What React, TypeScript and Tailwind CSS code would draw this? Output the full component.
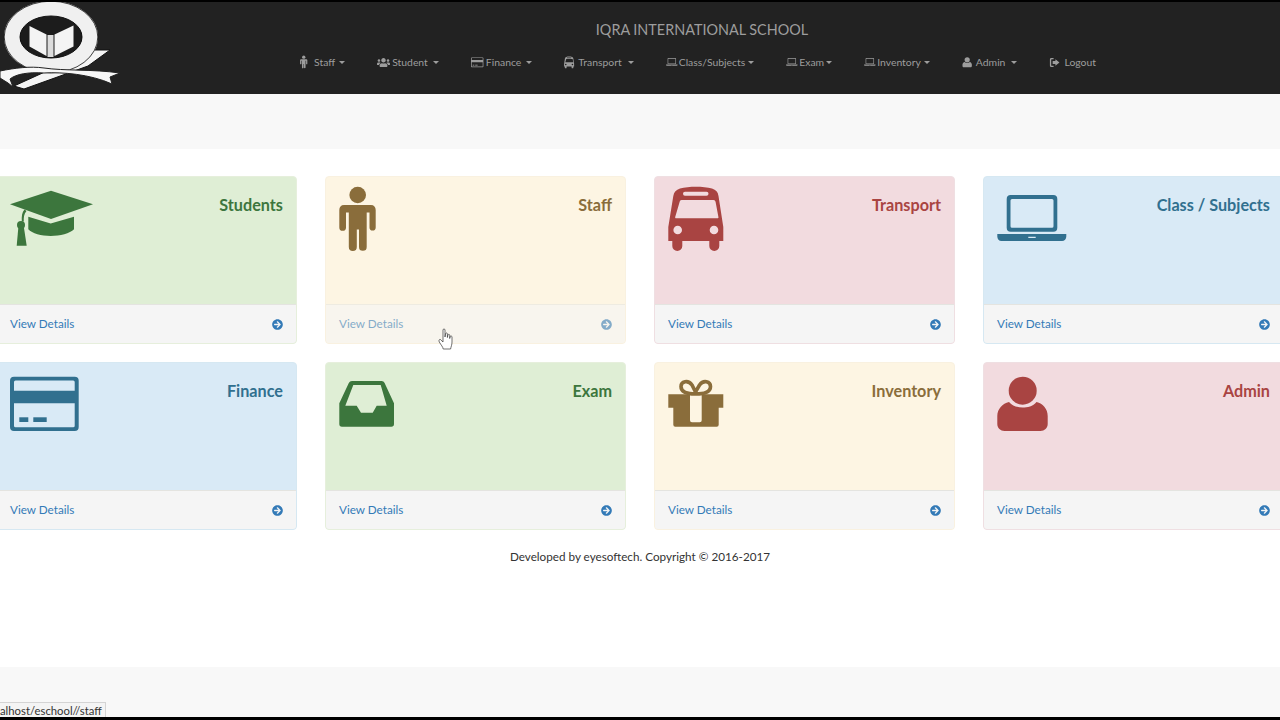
import React from "react";
import { FaArrowCircleRight, FaUsers } from "react-icons/fa";

type IconProps = { className?: string };

const Cap = ({ className }: IconProps) => (
  <svg viewBox="0 0 90 70" className={className} fill="currentColor">
    <path d="M0 20.3 41 6.7 83 20.3 41 35Z" />
    <path d="M18.3 32.7 40.7 39.6 64 32.7V45.3C60 49.5 50 52 40.7 52S22 49.5 18.3 45.3Z" />
    <path d="M14.5 25.5C12 28 11.5 32 11.8 37.5L13.8 37.5C13.6 33 14 30 16.5 27Z" />
    <circle cx="11" cy="41" r="4" />
    <path d="M8.3 44H14L16.7 61.7H6.7Z" />
  </svg>
);

const Male = ({ className }: IconProps) => (
  <svg viewBox="0 0 40 70" className={className} fill="currentColor">
    <circle cx="18.7" cy="11" r="8.3" />
    <path d="M5 21H32C35 21 36.7 23 36.7 26V43.5A3 3 0 0 1 30.5 43.5V28.5H27.7V63A3.2 3.2 0 0 1 20 63V45.5H17.8V63A3.2 3.2 0 0 1 9.8 63V28.5H7V43.5A3.2 3.2 0 0 1 .3 43.5V26C.3 23 2 21 5 21Z" />
  </svg>
);

const Bus = ({ className }: IconProps) => (
  <svg viewBox="0 0 60 70" className={className} fill="currentColor" fillRule="evenodd">
    <path d="M12 4.5C21 2 35 2 44 4.5 48 5.8 50 8 50.5 12L55.3 43V57H51.3V62A5 5 0 0 1 41.3 62V57H14.3V62A5 5 0 0 1 4.3 62V57H.3V43L5.3 12C6 8 8 5.8 12 4.5ZM17 7.7A2 2 0 0 0 17 11.7H38.5A2 2 0 0 0 38.5 7.7ZM13.5 16C12.5 16 11.9 16.8 11.6 18L7.2 33C7 33.8 7.4 34.3 8.2 34.3H49.5C50.3 34.3 50.6 33.8 50.4 33L47.6 18C47.3 16.8 46.7 16 45.5 16ZM9.7 41.7A4.3 4.3 0 1 0 9.7 50.3 4.3 4.3 0 1 0 9.7 41.7ZM46 41.7A4.3 4.3 0 1 0 46 50.3 4.3 4.3 0 1 0 46 41.7Z" />
  </svg>
);

const Laptop = ({ className }: IconProps) => (
  <svg viewBox="0 0 72 70" className={className} fill="currentColor" fillRule="evenodd">
    <path d="M13.7 11H56.3A4 4 0 0 1 60.3 15V43.7A4 4 0 0 1 56.3 47.7H13.7A4 4 0 0 1 9.7 43.7V15A4 4 0 0 1 13.7 11ZM15 15A1.5 1.5 0 0 0 13.5 16.5V42.3A1.5 1.5 0 0 0 15 43.8H55A1.5 1.5 0 0 0 56.5 42.3V16.5A1.5 1.5 0 0 0 55 15Z" />
    <path d="M.3 50H69.3V52.5C69.3 55 67.5 57 65 57H4.5C2 57 .3 55 .3 52.5ZM31.3 52.7V54H38.7V52.7Z" />
  </svg>
);

const Card = ({ className }: IconProps) => (
  <svg viewBox="0 0 72 70" className={className} fill="currentColor" fillRule="evenodd">
    <path d="M4 6.7H64.7A4 4 0 0 1 68.7 10.7V57A4 4 0 0 1 64.7 61H4A4 4 0 0 1 0 57V10.7A4 4 0 0 1 4 6.7ZM5.5 10.5A1.5 1.5 0 0 0 4 12V20.7H64.7V12A1.5 1.5 0 0 0 63.2 10.5ZM4 33.3V55.7A1.5 1.5 0 0 0 5.5 57.2H63.2A1.5 1.5 0 0 0 64.7 55.7V33.3Z" />
    <rect x="9.3" y="47.3" width="9" height="4.7" />
    <rect x="23.3" y="47.3" width="13.4" height="4.7" />
  </svg>
);

const Inbox = ({ className }: IconProps) => (
  <svg viewBox="0 0 60 70" className={className} fill="currentColor" fillRule="evenodd">
    <path d="M13 11H42.5C44 11 45 11.7 45.6 13L55 33.3V54A2.7 2.7 0 0 1 52.3 56.7H3A2.7 2.7 0 0 1 .3 54V33.3L9.8 13C10.5 11.7 11.5 11 13 11ZM14.3 15 6.3 35.7H17.7L22 42.7H33.7L37.7 35.7H47.7L41.7 15Z" />
  </svg>
);

const Gift = ({ className }: IconProps) => (
  <svg viewBox="0 0 60 70" className={className} fill="currentColor" fillRule="evenodd">
    <path d="M.3 24.3H55.3V37.7H50.7V54.7A2 2 0 0 1 48.7 56.7H7.3A2 2 0 0 1 5.3 54.7V37.7H.3ZM22 24.3V50.3A2 2 0 0 0 24 52.3H31.7A2 2 0 0 0 33.7 50.3V24.3Z" />
    <path
      d="M27.5 24C22 24 13 23 13 16.5 13 11.5 20 9.5 24 15L27.5 22 31.5 15C35.5 9.5 42.5 11.5 42.5 16.5 42.5 23 33 24 27.5 24Z"
      fill="none"
      stroke="currentColor"
      strokeWidth="3.6"
    />
  </svg>
);

const User = ({ className }: IconProps) => (
  <svg viewBox="0 0 60 70" className={className} fill="currentColor">
    <circle cx="25.7" cy="20.7" r="14" />
    <path d="M12 32C16 36.5 21 37.5 25.7 37.5S36 36.5 39.5 32C46 33.5 50.7 39 50.7 46V54C50.7 58 47.5 61 43.5 61H7.5C3.5 61 .3 58 .3 54V46C.3 39 5.5 33.5 12 32Z" />
  </svg>
);

const LogoutIcon = ({ className }: IconProps) => (
  <svg viewBox="0 0 12 12" className={className} fill="currentColor">
    <path d="M1 2.5A1.5 1.5 0 0 1 2.5 1H5V2.4H3A.6.6 0 0 0 2.4 3V9A.6.6 0 0 0 3 9.6H5V11H2.5A1.5 1.5 0 0 1 1 9.5Z" />
    <path d="M7 2.5 11.4 6 7 9.5V7.6H4V4.4H7Z" />
  </svg>
);

const Logo = () => (
  <svg viewBox="0 0 120 92" className="w-[120px] h-[92px] block">
    <path d="M93 48 110 48 88 64 24 87 14 84Z" fill="#f4f4f4" stroke="#111" strokeWidth="1" />
    <ellipse cx="51" cy="35" rx="39" ry="28" fill="none" stroke="#f0f0f0" strokeWidth="16" />
    <ellipse cx="51" cy="35" rx="46.8" ry="35.8" fill="none" stroke="#111" strokeWidth=".8" />
    <ellipse cx="51" cy="35" rx="31" ry="21" fill="#1c1c1c" stroke="#111" strokeWidth="1" />
    <path d="M29.5 24 46.5 32.5V54L29.5 44.5Z" fill="#f4f4f4" />
    <path d="M54.5 32.5 73.5 23.5V44.5L54.5 54Z" fill="#f4f4f4" />
    <path d="M47.5 33H53.5V55H47.5Z" fill="#dcdcdc" />
    <path d="M0 69C15 66 30 64 44 66 64 69 92 67 120 71L110 75 112 82C90 72 62 70 44 71 28 70 16 72 10 77L13 85 8 81 0 76Z" fill="#f7f7f7" stroke="#222" strokeWidth="1" />
  </svg>
);

const Hand = () => (
  <svg viewBox="0 0 16 22" className="absolute left-[438px] top-[328px] w-[16px] h-[22px]">
    <path
      d="M5 2C5 .6 7 .6 7 2V9L7.6 5.5C8 4.6 9.4 4.8 9.4 6V9.5L10 6.8C10.4 6 11.7 6.2 11.7 7.3V10.5L12.3 8.3C12.8 7.6 14 8 14 9V14C14 17 13 18.5 12.6 21H5.2C5 19 3 17 1.3 14 .5 12.5 1.2 11 2.4 11.5L5 14Z"
      fill="#fff"
      stroke="#333"
      strokeWidth=".7"
      strokeLinejoin="round"
    />
  </svg>
);

const Caret = () => (
  <span className="inline-block w-0 h-0 border-x-[3px] border-x-transparent border-t-[3px] border-t-[#9d9d9d]" />
);

const navItems: {
  icon: React.ReactNode;
  label: string;
  caret: boolean;
  gap: string;
  caretGap: string;
}[] = [
  { icon: <Male className="w-[8px] h-[14px]" />, label: "Staff", caret: true, gap: "gap-x-[6px]", caretGap: "ml-[4px]" },
  { icon: <FaUsers className="w-[13px] h-[13px]" />, label: "Student", caret: true, gap: "gap-x-[2px]", caretGap: "ml-[5px]" },
  { icon: <Card className="w-[13px] h-[13px]" />, label: "Finance", caret: true, gap: "gap-x-[2px]", caretGap: "ml-[5px]" },
  { icon: <Bus className="w-[11px] h-[13px]" />, label: "Transport", caret: true, gap: "gap-x-[3px]", caretGap: "ml-[6px]" },
  { icon: <Laptop className="w-[12px] h-[12px]" />, label: "Class/Subjects", caret: true, gap: "gap-x-[1px]", caretGap: "ml-[3px]" },
  { icon: <Laptop className="w-[12px] h-[12px]" />, label: "Exam", caret: true, gap: "gap-x-[1px]", caretGap: "ml-[2px]" },
  { icon: <Laptop className="w-[12px] h-[12px]" />, label: "Inventory", caret: true, gap: "gap-x-[1px]", caretGap: "ml-[3px]" },
  { icon: <User className="w-[12px] h-[13px]" />, label: "Admin", caret: true, gap: "gap-x-[2px]", caretGap: "ml-[6px]" },
  { icon: <LogoutIcon className="w-[11px] h-[11px]" />, label: "Logout", caret: false, gap: "gap-x-[4px]", caretGap: "" },
];

const panels = [
  { title: "Students", Icon: Cap, iconW: "w-[90px]", box: "bg-[#dfeed5] border-[#e6efdc]", text: "text-[#3c763d]", dim: false },
  { title: "Staff", Icon: Male, iconW: "w-[40px]", box: "bg-[#fdf5e3] border-[#f9f1e0]", text: "text-[#8a6d3b]", dim: true },
  { title: "Transport", Icon: Bus, iconW: "w-[60px]", box: "bg-[#f2dbdf] border-[#efdfe2]", text: "text-[#a94442]", dim: false },
  { title: "Class / Subjects", Icon: Laptop, iconW: "w-[72px]", box: "bg-[#d9eaf6] border-[#d6e8f2]", text: "text-[#31708f]", dim: false },
  { title: "Finance", Icon: Card, iconW: "w-[72px]", box: "bg-[#d9eaf6] border-[#d6e8f2]", text: "text-[#31708f]", dim: false },
  { title: "Exam", Icon: Inbox, iconW: "w-[60px]", box: "bg-[#dfeed5] border-[#e6efdc]", text: "text-[#3c763d]", dim: false },
  { title: "Inventory", Icon: Gift, iconW: "w-[60px]", box: "bg-[#fdf5e3] border-[#f9f1e0]", text: "text-[#8a6d3b]", dim: false },
  { title: "Admin", Icon: User, iconW: "w-[60px]", box: "bg-[#f2dbdf] border-[#efdfe2]", text: "text-[#a94442]", dim: false },
];

export default function App() {
  return (
    <div className="relative w-[1280px] h-[720px] overflow-hidden bg-white flex flex-col font-['Lato','Liberation_Sans',sans-serif] text-[#222]">
      <header className="h-[94px] shrink-0 bg-[#222222] border-t-2 border-black flex">
        <div className="w-[300px] shrink-0">
          <Logo />
        </div>
        <div className="w-[804px] flex flex-col">
          <div className="text-center text-[14.4px] leading-[20px] mt-[18px] text-[#9d9d9d]">IQRA INTERNATIONAL SCHOOL</div>
          <nav className="flex items-center gap-x-[32px] mt-[12px] text-[10.4px] leading-[20px] text-[#9d9d9d]">
            {navItems.map((n) => (
              <div key={n.label} className="flex items-center">
                <div className={`flex items-center ${n.gap}`}>
                  {n.icon}
                  <span>{n.label}</span>
                </div>
                {n.caret && (
                  <span className={`flex ${n.caretGap}`}>
                    <Caret />
                  </span>
                )}
              </div>
            ))}
          </nav>
        </div>
      </header>

      <div className="h-[55px] shrink-0 bg-[#f8f8f8]" />

      <main className="flex-1 flex flex-col">
        <div className="grid grid-cols-[repeat(4,301px)] gap-x-[28px] gap-y-[18px] -ml-[4px] w-[1288px] mt-[27px]">
          {panels.map((p) => (
            <div key={p.title} className={`h-[168px] rounded-[4px] border overflow-hidden flex flex-col ${p.box}`}>
              <div className={`flex-1 flex justify-between pl-[13px] pr-[13px] pt-[7px] ${p.text}`}>
                <p.Icon className={`${p.iconW} h-[70px] shrink-0`} />
                <div className="text-[16.2px] font-bold leading-[20px] mt-[11px]">{p.title}</div>
              </div>
              <div className={`h-[39px] shrink-0 bg-[#f5f5f5] border-t border-[#e4e4e0] flex items-center justify-between px-[13px] text-[11.7px] text-[#337ab7] ${p.dim ? "opacity-60" : ""}`}>
                <span>View Details</span>
                <FaArrowCircleRight className="w-[11px] h-[11px]" />
              </div>
            </div>
          ))}
        </div>
        <div className="mt-[18px] text-center text-[11.7px] leading-[17px] text-[#333]">
          Developed by eyesoftech. Copyright © 2016-2017
        </div>
      </main>

      <div className="h-[50px] shrink-0 bg-[#f8f8f8]" />
      <div className="h-[3px] shrink-0 bg-black" />

      <div className="absolute left-0 top-[702px] h-[15px] w-[106px] bg-[#f4f4f4] border-t border-r border-[#d4d4d4] text-[11.3px] leading-[15px] text-[#333] overflow-hidden whitespace-nowrap">
        alhost/eschool//staff
      </div>
      <Hand />
    </div>
  );
}
